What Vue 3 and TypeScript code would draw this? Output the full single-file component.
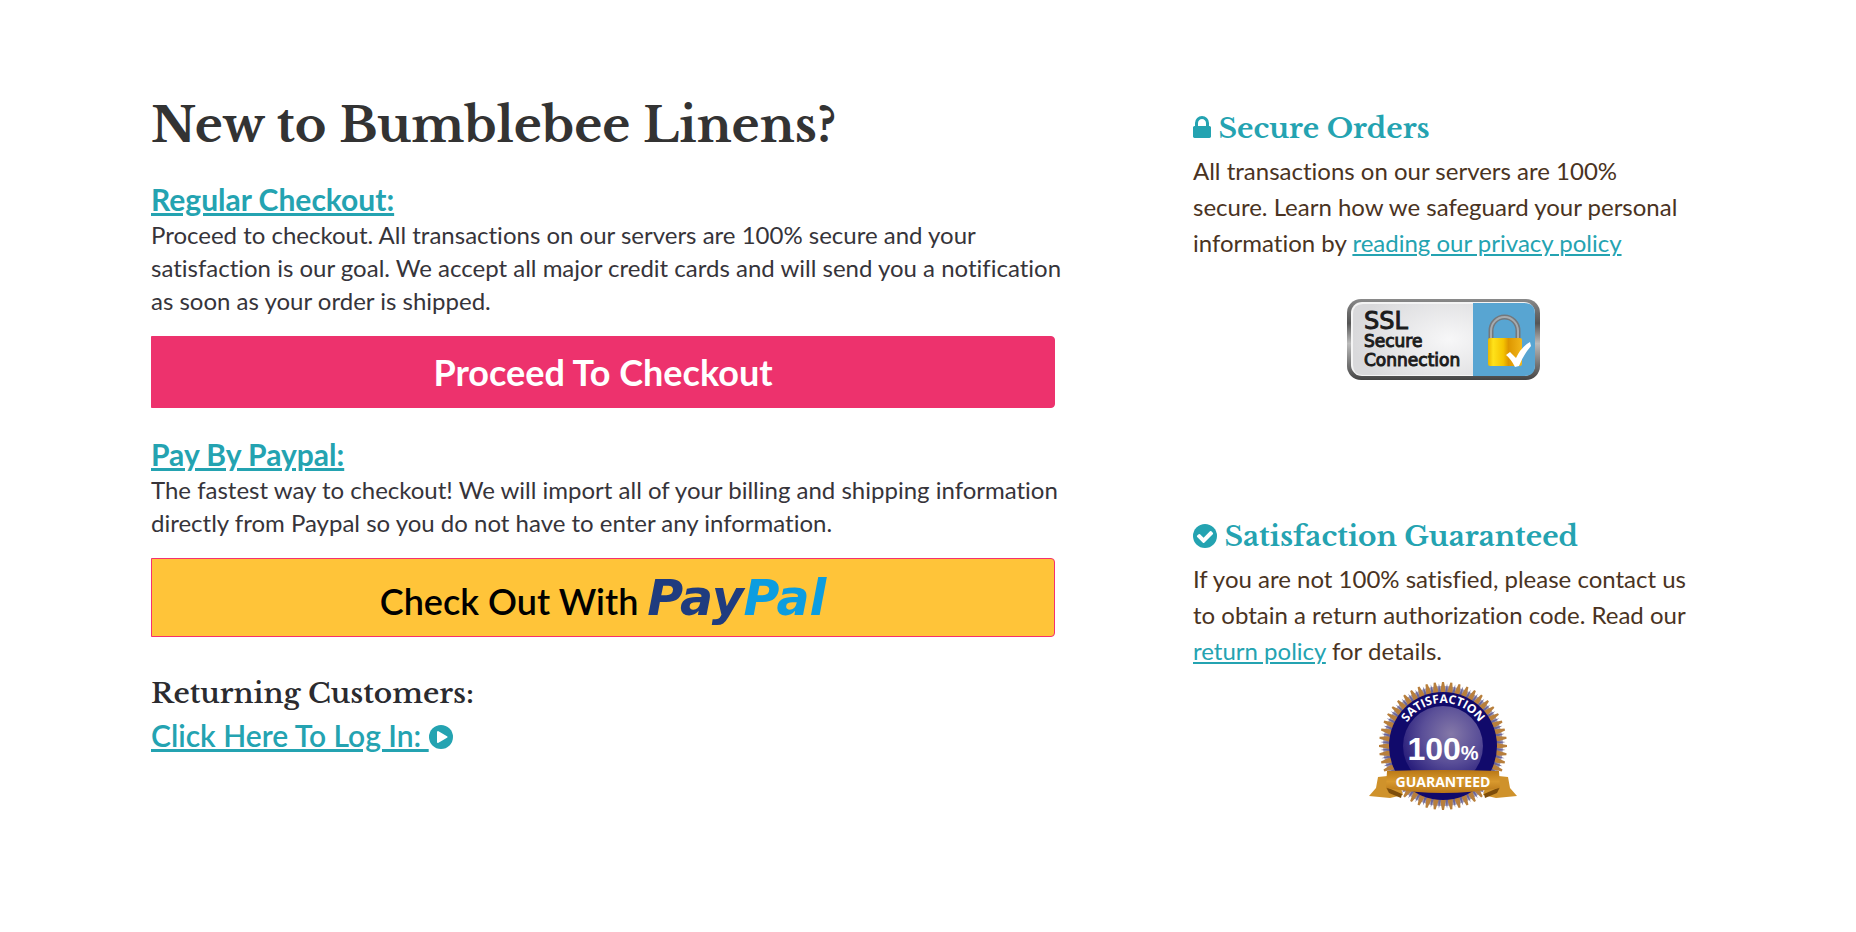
<script setup lang="ts">
const teeth: number[] = Array.from({ length: 48 }, (_, i) => i * 7.5)
</script>

<template>
  <main class="page">
    <section class="checkout">
      <h1>New to Bumblebee Linens?</h1>

      <a class="option" href="#checkout">Regular Checkout:</a>
      <p>
        Proceed to checkout. All transactions on our servers are 100% secure and your satisfaction is
        our goal. We accept all major credit cards and will send you a notification as soon as your
        order is shipped.
      </p>
      <button class="btn proceed" type="button">Proceed To Checkout</button>

      <a class="option" href="#paypal">Pay By Paypal:</a>
      <p>
        The fastest way to checkout! We will import all of your billing and shipping information
        directly from Paypal so you do not have to enter any information.
      </p>
      <button class="btn paypal" type="button">
        Check Out With <span class="brand"><span class="pay">Pay</span><span class="pal">Pal</span></span>
      </button>

      <h2 class="returning">Returning Customers:</h2>
      <a class="option login" href="#login">Click Here To Log In: <svg class="round" viewBox="128 128 1536 1536" aria-hidden="true">
          <circle cx="896" cy="896" r="768" fill="#24a3b1" />
          <path fill="#fff" d="M1312 896q0 37-32 55l-544 320q-15 9-32 9-16 0-32-8-32-19-32-56v-640q0-37 32-56 33-18 64 1l544 320q32 18 32 55z" />
        </svg></a>
    </section>

    <aside class="assurance">
      <section>
        <h2>
          <svg class="lock" viewBox="0 128 1152 1408" aria-hidden="true">
            <path fill="#24a3b1" d="M320 768h512v-192q0-106-75-181t-181-75-181 75-75 181v192zm832 96v576q0 40-28 68t-68 28h-960q-40 0-68-28t-28-68v-576q0-40 28-68t68-28h32v-192q0-184 132-316t316-132 316 132 132 316v192h32q40 0 68 28t28 68z" />
          </svg>
          Secure Orders
        </h2>
        <p>
          All transactions on our servers are 100% secure. Learn how we safeguard your personal
          information by <a href="#privacy">reading our privacy policy</a>
        </p>
        <svg class="ssl" viewBox="0 0 195 83" role="img" aria-label="SSL Secure Connection">
          <defs>
            <linearGradient id="frame" x1="0" y1="0" x2="0" y2="1">
              <stop offset="0" stop-color="#8a8a8a" />
              <stop offset=".1" stop-color="#777" />
              <stop offset=".3" stop-color="#555" />
              <stop offset=".55" stop-color="#bbb" />
              <stop offset=".8" stop-color="#777" />
              <stop offset="1" stop-color="#444" />
            </linearGradient>
            <radialGradient id="plate" cx=".8" cy=".5" r=".8">
              <stop offset="0" stop-color="#f7f7f8" />
              <stop offset="1" stop-color="#d9d9db" />
            </radialGradient>
            <linearGradient id="gold" x1="0" y1="0" x2="1" y2="0">
              <stop offset="0" stop-color="#e9b500" />
              <stop offset=".15" stop-color="#ffe21a" />
              <stop offset=".45" stop-color="#f5c400" />
              <stop offset=".6" stop-color="#dd9600" />
              <stop offset="1" stop-color="#f2b71a" />
            </linearGradient>
          </defs>
          <rect x="1" y="1" width="193" height="81" rx="14" fill="url(#frame)" />
          <rect x="5" y="4" width="184" height="74" rx="11" fill="#f4f4f4" />
          <path d="M17 6h110v71H17q-10 0-10-10V16q0-10 10-10z" fill="url(#plate)" />
          <path d="M127 5h51q11 0 11 11v51q0 11-11 11h-51z" fill="#58a5d2" />
          <g class="ssl-text">
            <text x="18" y="31" font-size="24">SSL</text>
            <text x="18" y="49" font-size="17">Secure</text>
            <text x="18" y="68" font-size="17">Connection</text>
          </g>
          <path d="M145 42V33a13.500 14 0 0 1 27 0v9" fill="none" stroke="#73787d" stroke-width="5" />
          <path d="M145 42V33a13.500 14 0 0 1 27 0v9" fill="none" stroke="#a6abaf" stroke-width="2" />
          <rect x="142" y="40" width="34" height="28" rx="2" fill="url(#gold)" />
          <path d="M160 57l4-3 6 6q5-11 14-16l1 4q-7 8-12 20l-4 1q-4-8-9-12z" fill="#fff" />
        </svg>
      </section>

      <section class="guarantee">
        <h2>
          <svg class="round" viewBox="0 0 1536 1536" aria-hidden="true">
            <circle cx="768" cy="768" r="768" fill="#24a3b1" />
            <path fill="#fff" d="M1284 606q0-28-18-46l-91-90q-19-19-45-19t-45 19l-408 407-226-226q-19-19-45-19t-45 19l-91 90q-18 18-18 46 0 27 18 45l362 362q19 19 45 19 27 0 46-19l543-543q18-18 18-45z" />
          </svg>
          Satisfaction Guaranteed
        </h2>
        <p>
          If you are not 100% satisfied, please contact us to obtain a return authorization code. Read
          our <a href="#returns">return policy</a> for details.
        </p>
        <svg class="seal" viewBox="0 0 148 131" role="img" aria-label="100% satisfaction guaranteed">
          <defs>
            <radialGradient id="orb" cx=".6" cy=".35" r=".65">
              <stop offset="0" stop-color="#8478a8" />
              <stop offset=".55" stop-color="#5a4f98" />
              <stop offset="1" stop-color="#2a1f7c" />
            </radialGradient>
            <linearGradient id="ribbon" x1="0" y1="0" x2="0" y2="1">
              <stop offset="0" stop-color="#b87716" />
              <stop offset=".5" stop-color="#d8992e" />
              <stop offset="1" stop-color="#b87618" />
            </linearGradient>
            <path id="arc" d="M31 65A43 43 0 0 1 117 65" />
          </defs>
          <g transform="translate(74 65)">
            <circle r="60" fill="#a39fb8" />
            <g v-for="angle in teeth" :key="angle" :transform="`rotate(${angle})`">
              <path d="M-3 -53L-1 -64H1L3 -53z" fill="#b87f3c" />
              <path d="M-3 -53L0 -64L3 -53z" fill="#6c6699" transform="rotate(3.750) scale(.6 .98)" />
            </g>
            <circle r="54" fill="#110a6b" />
            <circle r="40" fill="url(#orb)" />
          </g>
          <text class="arc-text"><textPath href="#arc" startOffset="50%" text-anchor="middle">SATISFACTION</textPath></text>
          <text class="hundred" x="74" y="79" text-anchor="middle"><tspan font-size="32">100</tspan><tspan font-size="20">%</tspan></text>
          <path d="M9 96L28 94L34 114L21 117L0 115L7 107z" fill="#cf922b" />
          <path d="M139 96L120 94L114 114L127 117L148 115L141 107z" fill="#cf922b" />
          <path d="M17 106L33 113L32 117L20 112z" fill="#7d4d0b" />
          <path d="M131 106L115 113L116 117L128 112z" fill="#7d4d0b" />
          <path d="M18 90Q74 88 130 90L131 107Q74 117 17 107z" fill="url(#ribbon)" />
          <text class="ribbon-text" x="74" y="106" text-anchor="middle">GUARANTEED</text>
        </svg>
      </section>
    </aside>
  </main>
</template>

<style>
body {
  margin: 0;
  background: #fff;
}
</style>

<style scoped>
.page {
  display: grid;
  grid-template-columns: 904fr 500fr;
  column-gap: 138px;
  padding: 87px 163px 60px 151px;
  font-family: Lato, "Open Sans", sans-serif;
  font-size: 24px;
  line-height: 33px;
  font-variant-ligatures: none;
  color: #36343a;
}
h1,
h2 {
  margin: 0;
  font-family: "Libre Baskerville", "Liberation Serif", serif;
  font-weight: 700;
}
h1 {
  margin-bottom: 17px;
  font-size: 48px;
  line-height: 76px;
  color: #333;
}
h2 {
  font-size: 28px;
  line-height: 48px;
}
p {
  margin: 0;
}
.checkout p {
  margin-right: -14px;
}
a {
  color: #24a3b1;
}
.option {
  display: block;
  width: fit-content;
  font-size: 30px;
  line-height: 38px;
  font-weight: 700;
  text-decoration-thickness: 3px;
}
.login {
  font-weight: 600;
}
.btn {
  display: block;
  width: 100%;
  margin: 19px 0 27px;
  padding: 0;
  border: 1px solid #ed326d;
  border-radius: 0 4px 4px 0;
  font-family: inherit;
  cursor: pointer;
}
.proceed {
  height: 72px;
  background: #ed326d;
  color: #fff;
  font-size: 36px;
  font-weight: 700;
}
.paypal {
  height: 79px;
  margin-bottom: 33px;
  padding-top: 2px;
  background: #ffc439;
  border-color: #f5306f;
  color: #000;
  font-size: 36px;
  font-weight: 600;
}
.brand {
  font: italic 700 49px "DejaVu Sans", Verdana, sans-serif;
}
.pay {
  color: #1f3c7f;
}
.pal {
  color: #0c9de0;
}
.returning {
  margin-bottom: -2px;
  color: #2b2b2f;
  font-weight: 600;
}
.round {
  width: 24px;
  height: 24px;
  vertical-align: -2px;
}
.lock {
  width: 18px;
  height: 22px;
}
.assurance {
  padding-top: 18px;
  line-height: 36px;
  color: #4a3322;
}
.ssl,
.seal {
  display: block;
  margin: 37px auto 0;
}
.assurance h2 {
  color: #24a3b1;
}
.ssl {
  width: 195px;
  height: 83px;
}
.seal {
  width: 148px;
  height: 131px;
  margin-top: 12px;
}
.ssl-text {
  font-family: "DejaVu Sans", sans-serif;
  font-weight: 400;
  fill: #1c1c1c;
  stroke: #1c1c1c;
  stroke-width: 1px;
}
.guarantee {
  margin-top: 132px;
}
.arc-text {
  font: 700 12px "Open Sans", sans-serif;
  fill: #fff;
}
.hundred {
  font-family: "Liberation Sans", sans-serif;
  font-weight: 700;
  fill: #fff;
}
.ribbon-text {
  font: 700 14px "Open Sans", sans-serif;
  fill: #fff;
}
</style>
